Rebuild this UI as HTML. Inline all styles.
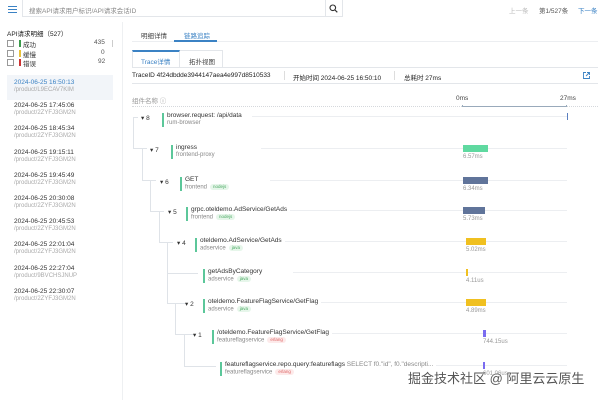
<!DOCTYPE html>
<html><head><meta charset="utf-8"><style>
*{margin:0;padding:0;box-sizing:border-box}
body{width:608px;height:400px;overflow:hidden;background:#fff;font-family:"Liberation Sans","Noto Sans CJK SC",sans-serif;color:#333;position:relative}
.a{position:absolute;white-space:nowrap}
.s{font-size:6.5px}
.t{font-size:6px;color:#aaa}
.v{position:absolute;background:#dfe3e8;width:1px}
.h{position:absolute;background:#dfe3e8;height:1px}
.bar{position:absolute;width:2px;height:14px;background:#5cc79a}
.tag{display:inline-block;font-size:4.5px;padding:0 3px;border-radius:4px;margin-left:3px;line-height:6px;vertical-align:middle}
.g{background:#e6f6ea;color:#4caa64}.r{background:#fdeaea;color:#d66}
.tl{position:absolute;height:1px;background:#eceef1}
</style></head><body>
<div class="a" style="left:8px;top:6px;width:9px;height:1px;background:#3b82c4"></div>
<div class="a" style="left:8px;top:9px;width:9px;height:1px;background:#3b82c4"></div>
<div class="a" style="left:8px;top:12px;width:9px;height:1px;background:#3b82c4"></div>
<div class="a" style="left:22px;top:0;width:304px;height:17px;border:1px solid #e3e6ea;border-top:none"></div>
<div class="a s" style="left:29px;top:5px;color:#888">搜索API请求用户标识/API请求会话ID</div>
<div class="a" style="left:325px;top:0;width:18px;height:17px;border:1px solid #e3e6ea;border-top:none"></div>
<svg class="a" style="left:329px;top:4px" width="9" height="9" viewBox="0 0 9 9"><circle cx="3.8" cy="3.8" r="2.8" fill="none" stroke="#333" stroke-width="1.1"/><path d="M6 6l2.3 2.3" stroke="#333" stroke-width="1.2"/></svg>
<div class="a s" style="left:509px;top:5px;color:#bbb">上一条</div>
<div class="a s" style="left:539px;top:5px;color:#555">第1/527条</div>
<div class="a s" style="left:578px;top:5px;color:#3b82c4">下一条</div>
<div class="a" style="left:7px;top:28px;font-size:6.5px;color:#222">API请求明细（527）</div>
<div class="a" style="left:7px;top:40px;width:7px;height:7px;border:1px solid #999"></div>
<div class="a" style="left:7px;top:50px;width:7px;height:7px;border:1px solid #999"></div>
<div class="a" style="left:7px;top:59px;width:7px;height:7px;border:1px solid #999"></div>
<div class="a" style="left:19px;top:40px;width:1.5px;height:7px;background:#3a9a4a"></div>
<div class="a" style="left:19px;top:50px;width:1.5px;height:7px;background:#e8c23a"></div>
<div class="a" style="left:19px;top:59px;width:1.5px;height:7px;background:#c33"></div>
<div class="a s" style="left:23px;top:39px">成功</div><div class="a s" style="left:23px;top:49px">缓慢</div><div class="a s" style="left:23px;top:58px">错误</div>
<div class="a s" style="left:94px;top:39px;color:#555">435</div><div class="a s" style="left:101px;top:49px;color:#555">0</div><div class="a s" style="left:98px;top:58px;color:#555">92</div>
<div class="a" style="left:112px;top:40px;width:1px;height:7px;background:#ccc"></div>
<div class="a" style="left:7px;top:75px;width:106px;height:25px;background:#f2f5f9"></div>
<div class="v" style="left:122px;top:22px;height:378px;background:#eef0f2"></div>
<div id="list"></div>
<div class="a s" style="left:141px;top:30px;color:#444">明细详情</div>
<div class="a s" style="left:184px;top:30px;color:#3b82c4">链路追踪</div>
<div class="h" style="left:132px;top:41px;width:466px;background:#eceef1"></div>
<div class="a" style="left:174px;top:40px;width:43px;height:2px;background:#3b82c4"></div>
<div class="a" style="left:132px;top:50px;width:48px;height:18px;border:1px solid #e3e6ea;border-top:2px solid #3b82c4;border-bottom:none"></div>
<div class="a" style="left:180px;top:50px;width:43px;height:18px;border:1px solid #e3e6ea;border-left:none;border-bottom:none"></div>
<div class="a s" style="left:141px;top:56px;color:#3b82c4">Trace详情</div>
<div class="a s" style="left:189px;top:56px;color:#444">拓扑视图</div>
<div class="a" style="left:132px;top:67px;width:466px;height:17px;border-top:1px solid #e3e6ea;border-bottom:1px solid #e3e6ea"></div>
<div class="a s" style="left:132px;top:72px;color:#222">TraceID 4f24dbdde3944147aea4e997d8510533</div>
<div class="a" style="left:284px;top:71px;width:1px;height:9px;background:#ddd"></div>
<div class="a s" style="left:293px;top:72px;color:#222">开始时间 2024-06-25 16:50:10</div>
<div class="a" style="left:394px;top:71px;width:1px;height:9px;background:#ddd"></div>
<div class="a s" style="left:404px;top:72px;color:#222">总耗时 27ms</div>
<svg class="a" style="left:583px;top:72px" width="7" height="7" viewBox="0 0 7 7"><path d="M3 .5H.5v6h6V4M4 .5h2.5V3M6.5.5L3 4" fill="none" stroke="#3b82c4" stroke-width=".9"/></svg>
<div class="a s" style="left:132px;top:95px;color:#999">组件名称 ⓘ</div>
<div class="a s" style="left:456px;top:95px;color:#444">0ms</div>
<div class="a s" style="left:560px;top:95px;color:#444">27ms</div>
<div class="a" style="left:132px;top:106px;width:466px;border-top:1px dotted #d5d8dc"></div>
<div class="a" style="left:462px;top:105px;width:105px;height:2px;border:1px solid #9ab;border-top:none"></div>
<div class="v" style="left:133px;top:117px;height:32px"></div><div class="h" style="left:133px;top:117px;width:5px"></div><div class="h" style="left:133px;top:148px;width:14px"></div>
<div class="v" style="left:142px;top:149px;height:32px"></div><div class="h" style="left:142px;top:180px;width:14px"></div>
<div class="v" style="left:150px;top:181px;height:31px"></div><div class="h" style="left:150px;top:211px;width:14px"></div>
<div class="v" style="left:159px;top:211px;height:32px"></div><div class="h" style="left:159px;top:242px;width:14px"></div>
<div class="v" style="left:167px;top:242px;height:62px"></div><div class="h" style="left:167px;top:273px;width:31px"></div><div class="h" style="left:167px;top:303px;width:20px"></div>
<div class="v" style="left:175px;top:303px;height:32px"></div><div class="h" style="left:175px;top:334px;width:20px"></div>
<div class="v" style="left:184px;top:334px;height:32px"></div><div class="h" style="left:184px;top:366px;width:32px"></div>
<div id="rows"></div>
<div class="a" style="left:408px;top:368px;font-size:13px;color:#555;text-shadow:0 0 2px #fff">掘金技术社区 @ 阿里云云原生</div>
<script>
var L=[["16:50:13","L9ECAV7KIM",1],["17:45:06","2ZYFJ3GM2N"],["18:45:34","2ZYFJ3GM2N"],["19:15:11","2ZYFJ3GM2N"],["19:45:49","2ZYFJ3GM2N"],["20:30:08","2ZYFJ3GM2N"],["20:45:53","2ZYFJ3GM2N"],["22:01:04","2ZYFJ3GM2N"],["22:27:04","9BVCHSJNUP"],["22:30:07","2ZYFJ3GM2N"]];
var h="";L.forEach(function(e,i){var y=79+i*23.2;h+='<div class="a s" style="left:14px;top:'+y+'px;color:'+(e[2]?'#3b82c4':'#333')+'">2024-06-25 '+e[0]+'</div><div class="a t" style="left:14px;top:'+(y+8)+'px">/product/'+e[1]+'</div>'});
document.getElementById("list").innerHTML=h;
var R=[[8,141,162,"browser.request: /api/data","rum-browser","",117,[567,1,"#5a7fc0"],""],
[7,150,171,"ingress","frontend-proxy","",149,[463,25,"#5fd9a0"],"6.57ms"],
[6,160,180,"GET","frontend","g:nodejs",181,[463,25,"#60749a"],"6.34ms"],
[5,168,186,"grpc.oteldemo.AdService/GetAds","frontend","g:nodejs",211,[463,22,"#60749a"],"5.73ms"],
[4,177,195,"oteldemo.AdService/GetAds","adservice","g:java",242,[466,20,"#f0c020"],"5.02ms"],
[0,0,203,"getAdsByCategory","adservice","g:java",273,[466,2,"#f0c020"],"4.11us"],
[2,185,203,"oteldemo.FeatureFlagService/GetFlag","adservice","g:java",303,[466,20,"#f0c020"],"4.89ms"],
[1,193,212,"/oteldemo.FeatureFlagService/GetFlag","featureflagservice","r:erlang",334,[483,3,"#7a6cf0"],"744.15us"],
[0,0,220,"featureflagservice.repo.query:featureflags <span style=\"color:#888\">SELECT f0.\"id\", f0.\"descripti...</span>","featureflagservice","r:erlang",366,[483,2,"#7a6cf0"],"601.06us"]];
h="";R.forEach(function(r){var y=r[6];
if(r[0])h+='<div class="a s" style="left:'+r[1]+'px;top:'+(y-3)+'px;color:#333">▾ '+r[0]+'</div>';
h+='<div class="bar" style="left:'+r[2]+'px;top:'+(y-4)+'px"></div>';
h+='<div class="tl" style="left:'+(r[2]+90)+'px;top:'+(y-1)+'px;width:'+(567-r[2]-90)+'px"></div>';
var tg="";if(r[5]){var p=r[5].split(":");tg='<span class="tag '+p[0]+'">'+p[1]+'</span>'}
h+='<div class="a" style="left:'+(r[2]+5)+'px;top:'+(y-5)+'px;font-size:6.5px;color:#333;background:#fff;padding-right:3px">'+r[3]+'</div>';
h+='<div class="a t" style="left:'+(r[2]+5)+'px;top:'+(y+3)+'px;color:#888">'+r[4]+tg+'</div>';
var b=r[7];h+='<div class="a" style="left:'+b[0]+'px;top:'+(y-4)+'px;width:'+b[1]+'px;height:7px;background:'+b[2]+'"></div>';
if(r[8])h+='<div class="a t" style="left:'+b[0]+'px;top:'+(y+5)+'px;color:#999">'+r[8]+'</div>';});
document.getElementById("rows").innerHTML=h;
</script>
</body></html>
